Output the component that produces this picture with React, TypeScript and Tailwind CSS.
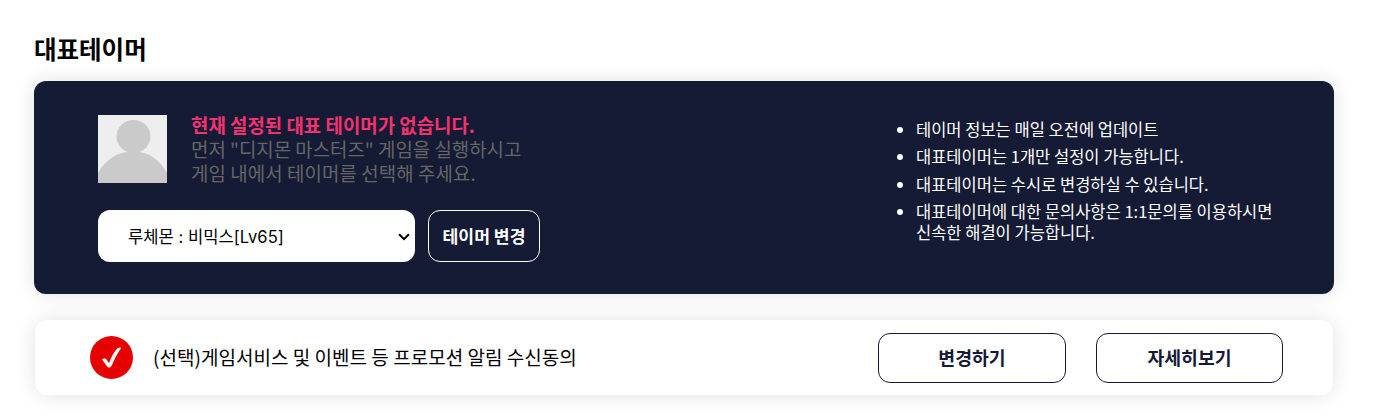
import { useState } from "react";

const NOTICES = [
  "테이머 정보는 매일 오전에 업데이트",
  "대표테이머는 1개만 설정이 가능합니다.",
  "대표테이머는 수시로 변경하실 수 있습니다.",
  "대표테이머에 대한 문의사항은 1:1문의를 이용하시면 신속한 해결이 가능합니다.",
];

const TAMERS = ["루체몬 : 비믹스[Lv65]"];

function Avatar() {
  return (
    <svg viewBox="0 0 69 68" className="h-[68px] w-[69px] shrink-0 bg-[#eeeeee]">
      <ellipse cx="35.5" cy="21.5" rx="17" ry="16.5" fill="#cacaca" />
      <path d="M0 58C8 44 20 36.5 35 36.5S61 44 69 58V68H0Z" fill="#cacaca" />
    </svg>
  );
}

function CheckBadge() {
  return (
    <svg viewBox="0 0 43 43" className="h-[43px] w-[43px] shrink-0">
      <circle cx="21.5" cy="21.5" r="21.5" fill="#e60000" />
      <path
        d="M12.2 23.6C13.5 22 15.4 22 16.5 23.6L19.1 27.4C21.2 21.2 24 16.1 27.2 12.6C28.2 11.7 29.8 11.6 31 12C27.3 17.5 24.1 23.2 21.7 29.6C20.8 31.8 18.2 32 17 30.2Z"
        fill="#fff"
        stroke="#fff"
        strokeWidth="0.2"
        strokeLinejoin="round"
      />
    </svg>
  );
}

export default function App() {
  const [tamer, setTamer] = useState(TAMERS[0]);

  return (
    <main className="h-[417px] overflow-hidden bg-white pl-[34px] pt-[31px] font-['Noto_Sans_CJK_KR',sans-serif] text-black">
      <h1 className="h-[50px] text-[24.5px] font-bold leading-[35px]">대표테이머</h1>

      <section className="flex h-[213px] w-[1300px] justify-between rounded-xl bg-[#151a35] pl-16 pt-[34px] shadow-[0_0_20px_rgba(0,0,0,0.12)]">
        <div>
          <div className="flex h-[95px] gap-6">
            <Avatar />
            <p className="-mt-[2px] whitespace-nowrap text-[18.9px] leading-6 text-[#666]">
              <strong className="font-bold text-[#f33270]">현재 설정된 대표 테이머가 없습니다.</strong>
              <br />
              먼저 "디지몬 마스터즈" 게임을 실행하시고
              <br />
              <span className="tracking-[0.1px]">게임 내에서 테이머를 선택해 주세요.</span>
            </p>
          </div>
          <div className="flex gap-[13px]">
            <div className="relative">
              <select
                value={tamer}
                onChange={(e) => setTamer(e.target.value)}
                className="h-[52px] w-[317px] appearance-none rounded-xl bg-white pl-[30px] pt-[3px] font-[Inter,'Noto_Sans_CJK_KR',sans-serif] text-[16.6px] text-black"
              >
                {TAMERS.map((name) => (
                  <option key={name}>{name}</option>
                ))}
              </select>
              <svg
                viewBox="0 0 12 8"
                className="pointer-events-none absolute right-[5px] top-[23px] h-2 w-3"
                fill="none"
                stroke="#000"
                strokeWidth="2"
              >
                <path d="M1.1 1.2L6 6.1L10.9 1.2" />
              </svg>
            </div>
            <button className="h-[52px] w-[112px] rounded-xl border border-white text-[17.2px] font-bold text-white">
              테이머 변경
            </button>
          </div>
        </div>

        <ul className="mt-1 w-[436px] list-disc space-y-[6.3px] pl-[18px] pr-[60px] text-[16.5px] leading-[21px] text-white">
          {NOTICES.map((notice) => (
            <li key={notice} className="break-keep">{notice}</li>
          ))}
        </ul>
      </section>

      <section className="ml-px mt-[26px] flex h-[75px] w-[1298px] items-center rounded-xl bg-white pl-[55px] pr-[50px] shadow-[0_0_20px_rgba(0,0,0,0.12)]">
        <CheckBadge />
        <p className="ml-5 grow text-[19px] tracking-[0.03px]">(선택)게임서비스 및 이벤트 등 프로모션 알림 수신동의</p>
        <div className="flex gap-[30px] text-[18.3px] font-bold text-[#151a35]">
          <button className="h-[50px] w-[188px] rounded-xl border border-[#151a35]">변경하기</button>
          <button className="h-[50px] w-[187px] rounded-xl border border-[#151a35]">자세히보기</button>
        </div>
      </section>
    </main>
  );
}
